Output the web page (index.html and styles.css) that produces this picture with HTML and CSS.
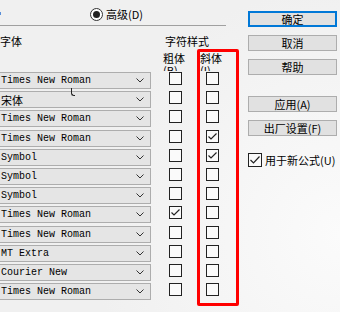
FILE: index.html
```html
<!DOCTYPE html>
<html lang="zh-CN">
<head>
    <meta charset="utf-8"/>
    <title>字体样式</title>
    <link rel="stylesheet" href="styles.css">
</head>
<body>
<div class="dialog">
    <div class="main">
        <div class="mode">
            <span class="radio"><span class="dot"></span></span>
            <span>高级(D)</span>
        </div>

        <div class="heads">
            <div class="h-font">字体</div>
            <div class="h-style">
                <div>字符样式</div>
                <div class="h-sub">
                    <span class="lbl">粗体<br>(B)</span>
                    <span class="lbl">斜体<br>(I)</span>
                </div>
            </div>
        </div>

        <div class="rows">
            <div class="row">
                <div class="combo"><span>Times New Roman</span><svg class="chev" width="8" height="5" viewBox="0 0 8 5"><polyline points="0.5,0.5 4,4 7.5,0.5"/></svg></div>
                <span class="box"></span>
                <span class="box"></span>
            </div>
            <div class="row">
                <div class="combo"><span class="cjk">宋体</span><svg class="chev" width="8" height="5" viewBox="0 0 8 5"><polyline points="0.5,0.5 4,4 7.5,0.5"/></svg></div>
                <span class="box"></span>
                <span class="box"></span>
            </div>
            <div class="row">
                <div class="combo"><span>Times New Roman</span><svg class="chev" width="8" height="5" viewBox="0 0 8 5"><polyline points="0.5,0.5 4,4 7.5,0.5"/></svg></div>
                <span class="box"></span>
                <span class="box"></span>
            </div>
            <div class="row">
                <div class="combo"><span>Times New Roman</span><svg class="chev" width="8" height="5" viewBox="0 0 8 5"><polyline points="0.5,0.5 4,4 7.5,0.5"/></svg></div>
                <span class="box"></span>
                <span class="box"><svg width="11" height="11" viewBox="0 0 11 11"><polyline points="1.5,5.5 4,8 9.5,2.5"/></svg></span>
            </div>
            <div class="row">
                <div class="combo"><span>Symbol</span><svg class="chev" width="8" height="5" viewBox="0 0 8 5"><polyline points="0.5,0.5 4,4 7.5,0.5"/></svg></div>
                <span class="box"></span>
                <span class="box"><svg width="11" height="11" viewBox="0 0 11 11"><polyline points="1.5,5.5 4,8 9.5,2.5"/></svg></span>
            </div>
            <div class="row">
                <div class="combo"><span>Symbol</span><svg class="chev" width="8" height="5" viewBox="0 0 8 5"><polyline points="0.5,0.5 4,4 7.5,0.5"/></svg></div>
                <span class="box"></span>
                <span class="box"></span>
            </div>
            <div class="row">
                <div class="combo"><span>Symbol</span><svg class="chev" width="8" height="5" viewBox="0 0 8 5"><polyline points="0.5,0.5 4,4 7.5,0.5"/></svg></div>
                <span class="box"></span>
                <span class="box"></span>
            </div>
            <div class="row">
                <div class="combo"><span>Times New Roman</span><svg class="chev" width="8" height="5" viewBox="0 0 8 5"><polyline points="0.5,0.5 4,4 7.5,0.5"/></svg></div>
                <span class="box"><svg width="11" height="11" viewBox="0 0 11 11"><polyline points="1.5,5.5 4,8 9.5,2.5"/></svg></span>
                <span class="box"></span>
            </div>
            <div class="row">
                <div class="combo"><span>Times New Roman</span><svg class="chev" width="8" height="5" viewBox="0 0 8 5"><polyline points="0.5,0.5 4,4 7.5,0.5"/></svg></div>
                <span class="box"></span>
                <span class="box"></span>
            </div>
            <div class="row">
                <div class="combo"><span>MT Extra</span><svg class="chev" width="8" height="5" viewBox="0 0 8 5"><polyline points="0.5,0.5 4,4 7.5,0.5"/></svg></div>
                <span class="box"></span>
                <span class="box"></span>
            </div>
            <div class="row">
                <div class="combo"><span>Courier New</span><svg class="chev" width="8" height="5" viewBox="0 0 8 5"><polyline points="0.5,0.5 4,4 7.5,0.5"/></svg></div>
                <span class="box"></span>
                <span class="box"></span>
            </div>
            <div class="row">
                <div class="combo"><span>Times New Roman</span><svg class="chev" width="8" height="5" viewBox="0 0 8 5"><polyline points="0.5,0.5 4,4 7.5,0.5"/></svg></div>
                <span class="box"></span>
                <span class="box"></span>
            </div>
        </div>
    </div>

    <div class="side">
        <button class="btn default">确定</button>
        <button class="btn">取消</button>
        <button class="btn">帮助</button>
        <button class="btn gap">应用(A)</button>
        <button class="btn">出厂设置(F)</button>
        <label class="check">
            <span class="box big"><svg width="12" height="12" viewBox="0 0 12 12"><polyline points="1.5,6 4.5,9 10.5,2.5"/></svg></span>
            <span>用于新公式(U)</span>
        </label>
    </div>

    <!-- things lying over the dialog -->
    <span class="focus-bit"></span>
    <span class="ibeam"></span>
    <div class="highlight"></div>
</div>
</body>
</html>
```

FILE: styles.css
```css
body {
    margin: 0;
    background: #f0f0f0;
}

.dialog {
    position: relative;
    display: flex;
    width: 340px;
    height: 312px;
    overflow: hidden;
    font-family: "Noto Sans CJK SC", sans-serif;
    font-size: 11px;
    color: #000;
    background: radial-gradient(circle at 100% 75%, #fbfbfb 0, #f0f0f0 60%);
}

.main {
    width: 248px;
}

.mode {
    display: flex;
    align-items: center;
    gap: 3px;
    width: 226px;
    height: 26px;
    padding: 3px 0 0 90px;
    box-sizing: border-box;
    border-bottom: 1px solid #a0a0a0;
}

.radio {
    display: flex;
    align-items: center;
    justify-content: center;
    width: 11px;
    height: 11px;
    border: 1px solid #333;
    border-radius: 50%;
    background: #fff;
}

.radio .dot {
    width: 7px;
    height: 7px;
    border-radius: 50%;
    background: #222;
}

.heads {
    display: flex;
    height: 45px;
    padding-top: 9px;
    box-sizing: border-box;
    overflow: hidden;
    line-height: 13px;
}

.h-font {
    width: 165px;
}

.h-sub {
    display: flex;
    margin: 4px 0 0 -2px;
}

.lbl {
    width: 37px;
    line-height: 12px;
}

.row {
    display: flex;
    align-items: flex-start;
    height: 19.2px;
}

.combo {
    display: flex;
    align-items: center;
    justify-content: space-between;
    width: 155px;
    height: 17px;
    margin: 1px 0 0 -4px;
    padding: 0 6px 0 4px;
    box-sizing: border-box;
    background: #e5e5e5;
    border: 1px solid #adadad;
    font-family: "Liberation Mono", monospace;
    font-size: 10px;
}

.combo .cjk {
    font-family: "Noto Sans CJK SC", sans-serif;
    font-size: 11px;
}

.chev polyline {
    fill: none;
    stroke: #333;
    stroke-width: 1;
}

.box {
    display: flex;
    align-items: center;
    justify-content: center;
    width: 13px;
    height: 13px;
    margin-top: 1px;
    box-sizing: border-box;
    border: 1px solid #222;
    background: #fafafa;
}

.row .box:nth-of-type(1) {
    margin-left: 18px;
}

.row .box:nth-of-type(2) {
    margin-left: 24px;
}

.box polyline {
    fill: none;
    stroke: #222;
    stroke-width: 1.2;
}

.side {
    display: flex;
    flex-direction: column;
    padding-top: 11px;
}

.btn {
    width: 89px;
    height: 16px;
    margin: 0 0 8px;
    padding: 0;
    border: 1px solid #adadad;
    background: #e1e1e1;
    font-family: "Noto Sans CJK SC", sans-serif;
    font-size: 11px;
    line-height: 14px;
    color: #000;
}

.btn.default {
    border: 2px solid #0078d7;
    line-height: 12px;
}

.btn.gap {
    margin-top: 13px;
}

.check {
    display: flex;
    align-items: center;
    gap: 3px;
    margin-top: 8px;
}

.box.big {
    width: 14px;
    height: 14px;
    margin-top: 0;
}

.focus-bit {
    position: absolute;
    left: 0;
    top: 12px;
    width: 1px;
    height: 3px;
    background: #5a8fd8;
}

.ibeam {
    position: absolute;
    left: 71px;
    top: 88px;
    width: 3px;
    height: 7px;
    border-left: 1px solid #222;
    border-bottom: 1px solid #222;
    border-radius: 0 0 0 3px;
}

.highlight {
    position: absolute;
    left: 197px;
    top: 49px;
    width: 42px;
    height: 257px;
    box-sizing: border-box;
    border: 3px solid #ff0000;
    border-radius: 2px;
}
```
